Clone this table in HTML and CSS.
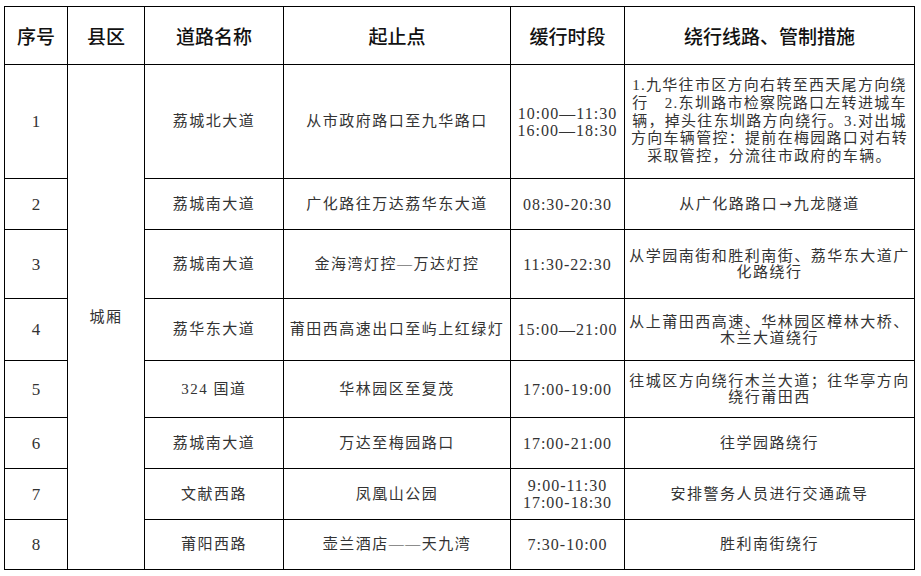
FILE: index.html
```html
<!DOCTYPE html>
<html lang="zh-CN">
<head>
<meta charset="utf-8">
<title>缓行路段</title>
<link rel="stylesheet" href="styles.css">
</head>
<body>
<table class="grid">
  <colgroup>
    <col class="c-no">
    <col class="c-area">
    <col class="c-road">
    <col class="c-span">
    <col class="c-time">
    <col class="c-detour">
  </colgroup>
  <thead>
    <tr class="h-head">
      <th>序号</th>
      <th>县区</th>
      <th>道路名称</th>
      <th>起止点</th>
      <th>缓行时段</th>
      <th>绕行线路、管制措施</th>
    </tr>
  </thead>
  <tbody>
    <tr class="h-114">
      <td class="num">1</td>
      <td class="area" rowspan="8">城厢</td>
      <td>荔城北大道</td>
      <td>从市政府路口至九华路口</td>
      <td class="time">10:00—11:30<br>16:00—18:30</td>
      <td class="dense">1.九华往市区方向右转至西天尾方向绕<br>行　2.东圳路市检察院路口左转进城车<br>辆，掉头往东圳路方向绕行。3.对出城<br>方向车辆管控：提前在梅园路口对右转<br>采取管控，分流往市政府的车辆。</td>
    </tr>
    <tr class="h-51">
      <td class="num">2</td>
      <td>荔城南大道</td>
      <td>广化路往万达荔华东大道</td>
      <td class="time">08:30-20:30</td>
      <td>从广化路路口<span class="arrow">→</span>九龙隧道</td>
    </tr>
    <tr class="h-69">
      <td class="num">3</td>
      <td>荔城南大道</td>
      <td>金海湾灯控—万达灯控</td>
      <td class="time">11:30-22:30</td>
      <td class="multi">从学园南街和胜利南街、荔华东大道广<br>化路绕行</td>
    </tr>
    <tr class="h-62">
      <td class="num">4</td>
      <td>荔华东大道</td>
      <td>莆田西高速出口至屿上红绿灯</td>
      <td class="time">15:00—21:00</td>
      <td class="multi">从上莆田西高速、华林园区樟林大桥、<br>木兰大道绕行</td>
    </tr>
    <tr class="h-57">
      <td class="num">5</td>
      <td>324 国道</td>
      <td>华林园区至复茂</td>
      <td class="time">17:00-19:00</td>
      <td class="multi">往城区方向绕行木兰大道；往华亭方向<br>绕行莆田西</td>
    </tr>
    <tr class="h-51">
      <td class="num">6</td>
      <td>荔城南大道</td>
      <td>万达至梅园路口</td>
      <td class="time">17:00-21:00</td>
      <td>往学园路绕行</td>
    </tr>
    <tr class="h-51">
      <td class="num">7</td>
      <td>文献西路</td>
      <td>凤凰山公园</td>
      <td class="time">9:00-11:30<br>17:00-18:30</td>
      <td>安排警务人员进行交通疏导</td>
    </tr>
    <tr class="h-50">
      <td class="num">8</td>
      <td>莆阳西路</td>
      <td>壶兰酒店——天九湾</td>
      <td class="time">7:30-10:00</td>
      <td>胜利南街绕行</td>
    </tr>
  </tbody>
</table>
</body>
</html>
```
FILE: styles.css
```css
html, body {
  margin: 0;
  padding: 0;
  background: #ffffff;
}

body {
  padding: 6px 0 0 4px;
}

.grid {
  border-collapse: collapse;
  table-layout: fixed;
  width: 911px;
  font-family: "Liberation Serif", "Noto Sans CJK SC", serif;
  color: #333333;
}

.c-no { width: 63px; }
.c-area { width: 77px; }
.c-span { width: 227px; }
.c-road { width: 139px; }
.c-time { width: 114px; }
.c-detour { width: 290px; }

.grid th,
.grid td {
  border: 1px solid #000000;
  text-align: center;
  vertical-align: middle;
  padding: 0 2px;
  overflow: hidden;
}

.grid th {
  font-family: "Noto Sans CJK SC", "Noto Sans", sans-serif;
  font-size: 19px;
  font-weight: 500;
  color: #111111;
  white-space: nowrap;
}

.grid td {
  font-size: 15px;
  letter-spacing: 1.5px;
  line-height: 17px;
  white-space: nowrap;
}

.grid td.num {
  font-size: 17px;
  letter-spacing: 0;
}

.grid td.time {
  font-size: 16px;
  letter-spacing: 1px;
  line-height: 17px;
}

.grid td.dense {
  letter-spacing: 1.3px;
  line-height: 17.7px;
  padding: 0 1px;
}

.grid td.multi {
  line-height: 16px;
}

.arrow {
  font-family: "DejaVu Sans", sans-serif;
  letter-spacing: 0;
  margin: 0 2px 0 1px;
}

.h-head { height: 58px; }
.h-114 { height: 114px; }
.h-51 { height: 51px; }
.h-69 { height: 69px; }
.h-62 { height: 62px; }
.h-57 { height: 57px; }
.h-50 { height: 50px; }
```
